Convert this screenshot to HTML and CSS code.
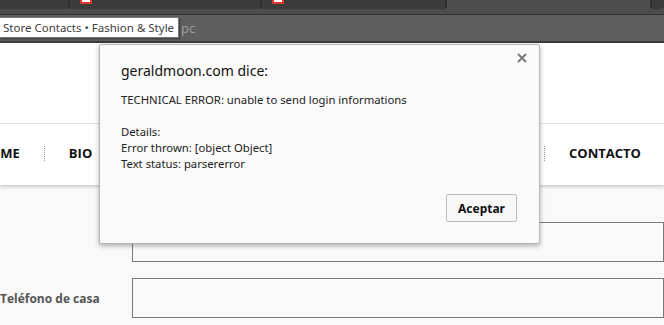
FILE: index.html
```html
<!DOCTYPE html>
<html>
<head>
    <title>Contacto - Gerald Moon</title>
    <link rel="stylesheet" href="styles.css">
</head>
<body>
    <div class="browser">
        <div class="tabstrip">
            <div class="tab tab-first"></div>
            <div class="tab"><span class="favicon"></span></div>
            <div class="tab"><span class="favicon"></span></div>
            <div class="tab tab-active"></div>
            <div class="tab tab-last"></div>
        </div>
        <div class="toolbar">
            <span class="bookmark">pc</span>
        </div>
    </div>

    <div class="tooltip">Store Contacts • Fashion &amp; Style</div>

    <div class="site">
        <header class="site-header"></header>

        <nav class="main-nav">
            <ul>
                <li>HOME</li>
                <li>BIO</li>
                <li class="nav-last">CONTACTO</li>
            </ul>
        </nav>

        <form class="contact-form">
            <div class="field">
                <label></label>
                <input type="text">
            </div>
            <div class="field">
                <label>Teléfono de casa</label>
                <input type="text">
            </div>
        </form>
    </div>

    <div class="alert">
        <svg class="alert-close" width="10" height="10" viewBox="0 0 10 10">
            <path d="M1 1 L9 9 M9 1 L1 9" stroke="#7a7a7a" stroke-width="2"/>
        </svg>
        <h2 class="alert-title">geraldmoon.com dice:</h2>
        <div class="alert-message">TECHNICAL ERROR: unable to send login informations

Details:
Error thrown: [object Object]
Text status: parsererror</div>
        <div class="alert-buttons">
            <button class="alert-ok">Aceptar</button>
        </div>
    </div>
</body>
</html>
```

FILE: styles.css
```css
* {
    margin: 0;
    padding: 0;
    box-sizing: border-box;
}

body {
    background: #f9f9f9;
    font-family: 'Open Sans', sans-serif;
    overflow: hidden;
    width: 664px;
    height: 325px;
}

/* browser chrome */
.browser {
    background: #3a3a3a;
}

.tabstrip {
    height: 15px;
    display: flex;
    background: #4d4d4d;
    border-bottom: 1px solid #333;
    overflow: hidden;
}

.tab {
    height: 9px;
    background: #3b3b3b;
    border-right: 2px solid #2e2e2e;
    border-bottom-right-radius: 4px;
}

.tab-first { width: 70px; }
.tab:nth-child(2) { width: 192px; }
.tab:nth-child(3) { width: 185px; }

.tab-active {
    width: 203px;
    background: #4d4d4d;
    border-right: none;
}

.tab-last {
    flex: 1;
    border-left: 2px solid #2e2e2e;
    border-bottom-left-radius: 4px;
    border-right: none;
}

.favicon {
    display: block;
    width: 12px;
    height: 4px;
    margin-left: 10px;
    background: #fff;
    border: 2px solid #d33;
    border-top: none;
}

.toolbar {
    height: 28px;
    background: #5f5f5f;
    border-bottom: 2px solid #3b3b3b;
    padding-left: 181px;
}

.bookmark {
    font-family: 'Noto Sans', sans-serif;
    font-size: 13px;
    line-height: 26px;
    color: #9c9c9c;
}

.tooltip {
    position: absolute;
    left: 0;
    top: 17px;
    width: 179px;
    height: 21px;
    background: #fff;
    border: 1px solid #777;
    border-left: none;
    box-shadow: 1px 1px 2px rgba(0, 0, 0, 0.4);
    font-family: 'Noto Sans', sans-serif;
    font-size: 11.5px;
    line-height: 19px;
    color: #404040;
    padding-left: 3px;
    white-space: nowrap;
}

/* site */
.site-header {
    height: 81px;
    background: #fff;
    border-bottom: 1px solid #e4e4e4;
}

.main-nav {
    height: 61px;
    background: #fff;
    box-shadow: 0 2px 3px rgba(0, 0, 0, 0.18);
    position: relative;
}

.main-nav ul {
    list-style: none;
    display: flex;
    align-items: center;
    height: 100%;
    padding-bottom: 3px;
    margin-left: -44px;
}

.main-nav li {
    font-size: 13px;
    font-weight: 700;
    color: #111;
    padding: 0 24px;
    line-height: 15px;
}

.main-nav li + li {
    border-left: 1px dotted #999;
}

.main-nav .nav-last {
    margin-left: auto;
    width: 120px;
}

.contact-form {
    padding-top: 37px;
}

.field {
    display: flex;
    align-items: center;
    margin-bottom: 16px;
}

.field label {
    flex-shrink: 0;
    width: 132px;
    font-size: 12px;
    font-weight: 700;
    color: #555;
}

.field input {
    width: 560px;
    height: 40px;
    border: 1px solid #7a7a7a;
    background: #fafafa;
}

/* javascript alert */
.alert {
    position: absolute;
    left: 99px;
    top: 44px;
    width: 441px;
    height: 200px;
    background: #fafafa;
    border: 1px solid #b5b5b5;
    border-radius: 2px;
    box-shadow: 0 2px 5px rgba(0, 0, 0, 0.3);
    padding: 16px 21px 0;
    font-family: 'Noto Sans', sans-serif;
    color: #222;
}

.alert-close {
    position: absolute;
    right: 12px;
    top: 8px;
}

.alert-title {
    font-size: 14px;
    font-weight: 400;
    line-height: 20px;
    color: #111;
}

.alert-message {
    margin-top: 11px;
    font-size: 11.3px;
    line-height: 16px;
    white-space: pre-line;
}

.alert-buttons {
    display: flex;
    justify-content: flex-end;
    margin-top: 22px;
    padding-right: 1px;
}

.alert-ok {
    width: 71px;
    height: 28px;
    background: #f8f8f8;
    border: 1px solid #bcbcbc;
    border-radius: 2px;
    font-family: 'Noto Sans', sans-serif;
    font-size: 12px;
    font-weight: 700;
    color: #111;
}
```
